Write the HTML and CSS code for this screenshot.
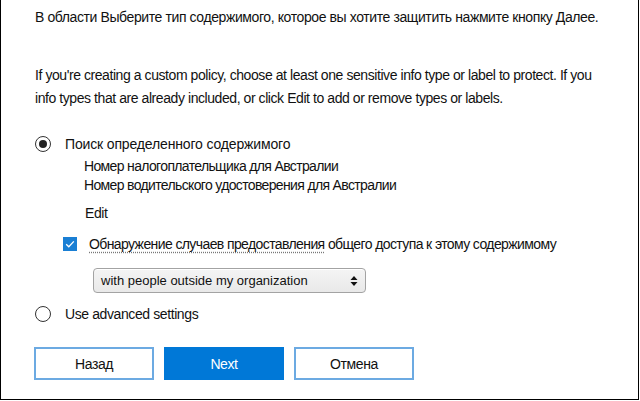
FILE: index.html
```html
<!DOCTYPE html>
<html lang="ru">
<head>
<meta charset="utf-8">
<link rel="stylesheet" href="styles.css">
</head>
<body>
<div class="frame">
  <p class="intro">В области Выберите тип содержимого, которое вы хотите защитить нажмите кнопку Далее.</p>
  <p class="note">If you're creating a custom policy, choose at least one sensitive info type or label to protect. If you<br>info types that are already included, or click Edit to add or remove types or labels.</p>

  <div class="radio-row first">
    <span class="radio checked"></span>
    <span class="label label-wide">Поиск определенного содержимого</span>
  </div>
  <ul class="types">
    <li>Номер налогоплательщика для Австралии</li>
    <li>Номер водительского удостоверения для Австралии</li>
  </ul>
  <div class="edit">Edit</div>

  <div class="check-row">
    <span class="checkbox"><svg width="14" height="14" viewBox="0 0 14 14"><path d="M3.2 7.2 L5.8 9.8 L10.8 4.4" fill="none" stroke="#fff" stroke-width="1.3"/></svg></span>
    <span class="label check-label"><span class="dotted">Обнаружение случаев предоставления</span> общего доступа к этому содержимому</span>
  </div>

  <div class="select">
    <span class="select-text">with people outside my organization</span>
    <svg class="arrows" width="8" height="12" viewBox="0 0 8 12"><path d="M4 1 L7.5 5 L0.5 5 Z M4 11 L7.5 7 L0.5 7 Z" fill="#111"/></svg>
  </div>

  <div class="radio-row second">
    <span class="radio"></span>
    <span class="label">Use advanced settings</span>
  </div>

  <div class="buttons">
    <button class="btn">Назад</button>
    <button class="btn primary">Next</button>
    <button class="btn">Отмена</button>
  </div>
</div>
</body>
</html>
```

FILE: styles.css
```css
html, body {
  margin: 0;
  padding: 0;
  background: #fff;
}

.frame {
  box-sizing: border-box;
  width: 639px;
  height: 400px;
  border-left: 1px solid #000;
  border-right: 1px solid #000;
  border-bottom: 1px solid #000;
  padding: 7px 0 0 34px;
  font-family: "Liberation Sans", Arial, sans-serif;
  font-size: 14px;
  color: #111;
  letter-spacing: -0.4px;
  overflow: hidden;
  display: flex;
  flex-direction: column;
  align-items: flex-start;
}

.intro {
  margin: 0;
  line-height: 20px;
  white-space: nowrap;
}

.note {
  margin: 37px 0 0 0;
  line-height: 23px;
  white-space: nowrap;
  letter-spacing: -0.43px;
}

.radio-row {
  display: flex;
  align-items: center;
  height: 20px;
}

.radio-row.first { margin-top: 24px; }
.radio-row.second { margin-top: 11px; }

.label-wide {
  letter-spacing: -0.15px;
}

.radio {
  box-sizing: border-box;
  width: 16px;
  height: 16px;
  border: 1.5px solid #333;
  border-radius: 50%;
  margin-left: 0;
  margin-right: 14px;
  display: flex;
  align-items: center;
  justify-content: center;
}

.radio.checked::after {
  content: "";
  width: 8px;
  height: 8px;
  border-radius: 50%;
  background: #222;
}

.types {
  list-style: none;
  margin: 3px 0 0 49px;
  padding: 0;
  letter-spacing: -0.65px;
}

.types li {
  line-height: 19px;
}

.edit {
  margin: 8px 0 0 50px;
  line-height: 20px;
}

.check-row {
  display: flex;
  align-items: center;
  height: 20px;
  margin: 11px 0 0 28px;
}

.checkbox {
  width: 14px;
  height: 14px;
  background: #1a7fd4;
  display: flex;
  margin-right: 12px;
}

.check-label {
  letter-spacing: -0.6px;
}

.dotted {
  text-decoration: underline dotted #777;
  text-underline-offset: 3px;
}

.select {
  box-sizing: border-box;
  margin: 14px 0 0 58px;
  width: 273px;
  height: 25px;
  border: 1px solid #a3a3a3;
  border-radius: 4px;
  background: linear-gradient(#f4f4f4, #e9e9e9);
  display: flex;
  align-items: center;
  justify-content: space-between;
  padding: 0 7px 0 7px;
  box-shadow: inset 0 1px 0 #fff;
}

.select-text {
  font-size: 13px;
  letter-spacing: 0;
  color: #111;
}

.buttons {
  display: flex;
  gap: 10px;
  margin: 23px 0 0 -1px;
}

.btn {
  box-sizing: border-box;
  width: 120px;
  height: 33px;
  border: 2px solid #6caae2;
  background: #fff;
  font-family: "Liberation Sans", Arial, sans-serif;
  font-size: 14px;
  letter-spacing: -0.4px;
  color: #111;
  padding: 0;
}

.btn.primary {
  background: #0078d7;
  border-color: #0078d7;
  color: #fff;
}
```
